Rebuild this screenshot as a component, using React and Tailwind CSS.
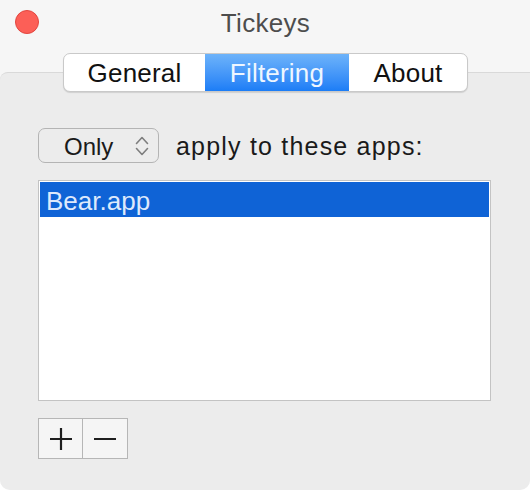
import React from "react";

const font = { fontFamily: '"Liberation Sans", Arial, sans-serif' };

export default function App() {
  return (
    <div className="w-[530px] h-[490px] bg-white">
      <div
        className="w-[530px] h-[490px] bg-[#f6f6f6] rounded-b-[10px] overflow-hidden flex flex-col"
        style={font}
      >
        {/* Title bar */}
        <div className="h-[53px] relative flex justify-center">
          <div className="absolute left-[15px] top-[10px] w-[24px] h-[24px] rounded-full bg-[#fc5f57] border border-[#e2463f]" />
          <div className="mt-[10px] h-[26px] leading-[26px] text-[26px] tracking-[0.3px] text-[#4d4d4d] pl-[1px]">
            Tickeys
          </div>
        </div>

        {/* Tabs */}
        <div className="relative z-10 flex justify-center pl-[1px]">
          <div className="flex h-[39px] rounded-[7px] border border-[#c9c9c9] bg-white overflow-hidden shadow-[0_1px_1px_rgba(0,0,0,0.12)] text-[26px] leading-[26px] tracking-[0.2px]">
            <div className="w-[141px] flex items-center justify-center text-[#111] pt-[1px]">
              General
            </div>
            <div className="w-[144px] flex items-center justify-center text-[#eef6ff] pt-[1px] bg-gradient-to-b from-[#6db3fa] to-[#1b7df6]">
              Filtering
            </div>
            <div className="w-[118px] flex items-center justify-center text-[#111] pt-[1px]">
              About
            </div>
          </div>
        </div>

        {/* Panel */}
        <div className="-mt-[20px] flex-1 bg-[#ececec] border-t border-[#d9d9d9] rounded-tl-[8px] px-[38px] pt-[55px]">
          <div className="flex items-center h-[35px]">
            <div className="w-[121px] h-[35px] rounded-[7px] border border-[#b4b4b4] bg-[#ececec] flex items-center pl-[25px] relative">
              <span className="text-[24px] leading-[24px] text-[#1a1a1a] pt-[2px]">Only</span>
              <svg
                className="absolute left-[95px] top-[6px]"
                width="16"
                height="22"
                viewBox="0 0 16 22"
                fill="none"
                stroke="#7e7e7e"
                strokeWidth="1.6"
                strokeLinecap="round"
                strokeLinejoin="round"
              >
                <path d="M2.5 8.5 L8 2.5 L13.5 8.5" />
                <path d="M2.5 13.5 L8 19.5 L13.5 13.5" />
              </svg>
            </div>
            <span className="ml-[17px] text-[25px] leading-[25px] tracking-[1.2px] text-[#1a1a1a] pt-[2px]">
              apply to these apps:
            </span>
          </div>

          <div className="mt-[17px] w-[453px] h-[221px] bg-white border border-[#c3c3c3] p-[1px]">
            <div className="h-[35px] bg-[#0f63d6] flex items-center pl-[6px]">
              <span className="text-[26px] leading-[26px] text-[#dde9fc] pt-[3px]">Bear.app</span>
            </div>
          </div>

          <div className="mt-[17px] flex">
            <div className="w-[45px] h-[41px] bg-[#f5f5f5] border border-[#b6b6b6] flex items-center justify-center">
              <svg width="22" height="22" viewBox="0 0 22 22" stroke="#1e1e1e" strokeWidth="2.2">
                <path d="M11 0 V22 M0 11 H22" />
              </svg>
            </div>
            <div className="w-[45px] h-[41px] bg-[#f5f5f5] border border-l-0 border-[#b6b6b6] flex items-center justify-center">
              <svg width="22" height="22" viewBox="0 0 22 22" stroke="#1e1e1e" strokeWidth="2.2">
                <path d="M0 11 H22" />
              </svg>
            </div>
          </div>
        </div>
      </div>
    </div>
  );
}
